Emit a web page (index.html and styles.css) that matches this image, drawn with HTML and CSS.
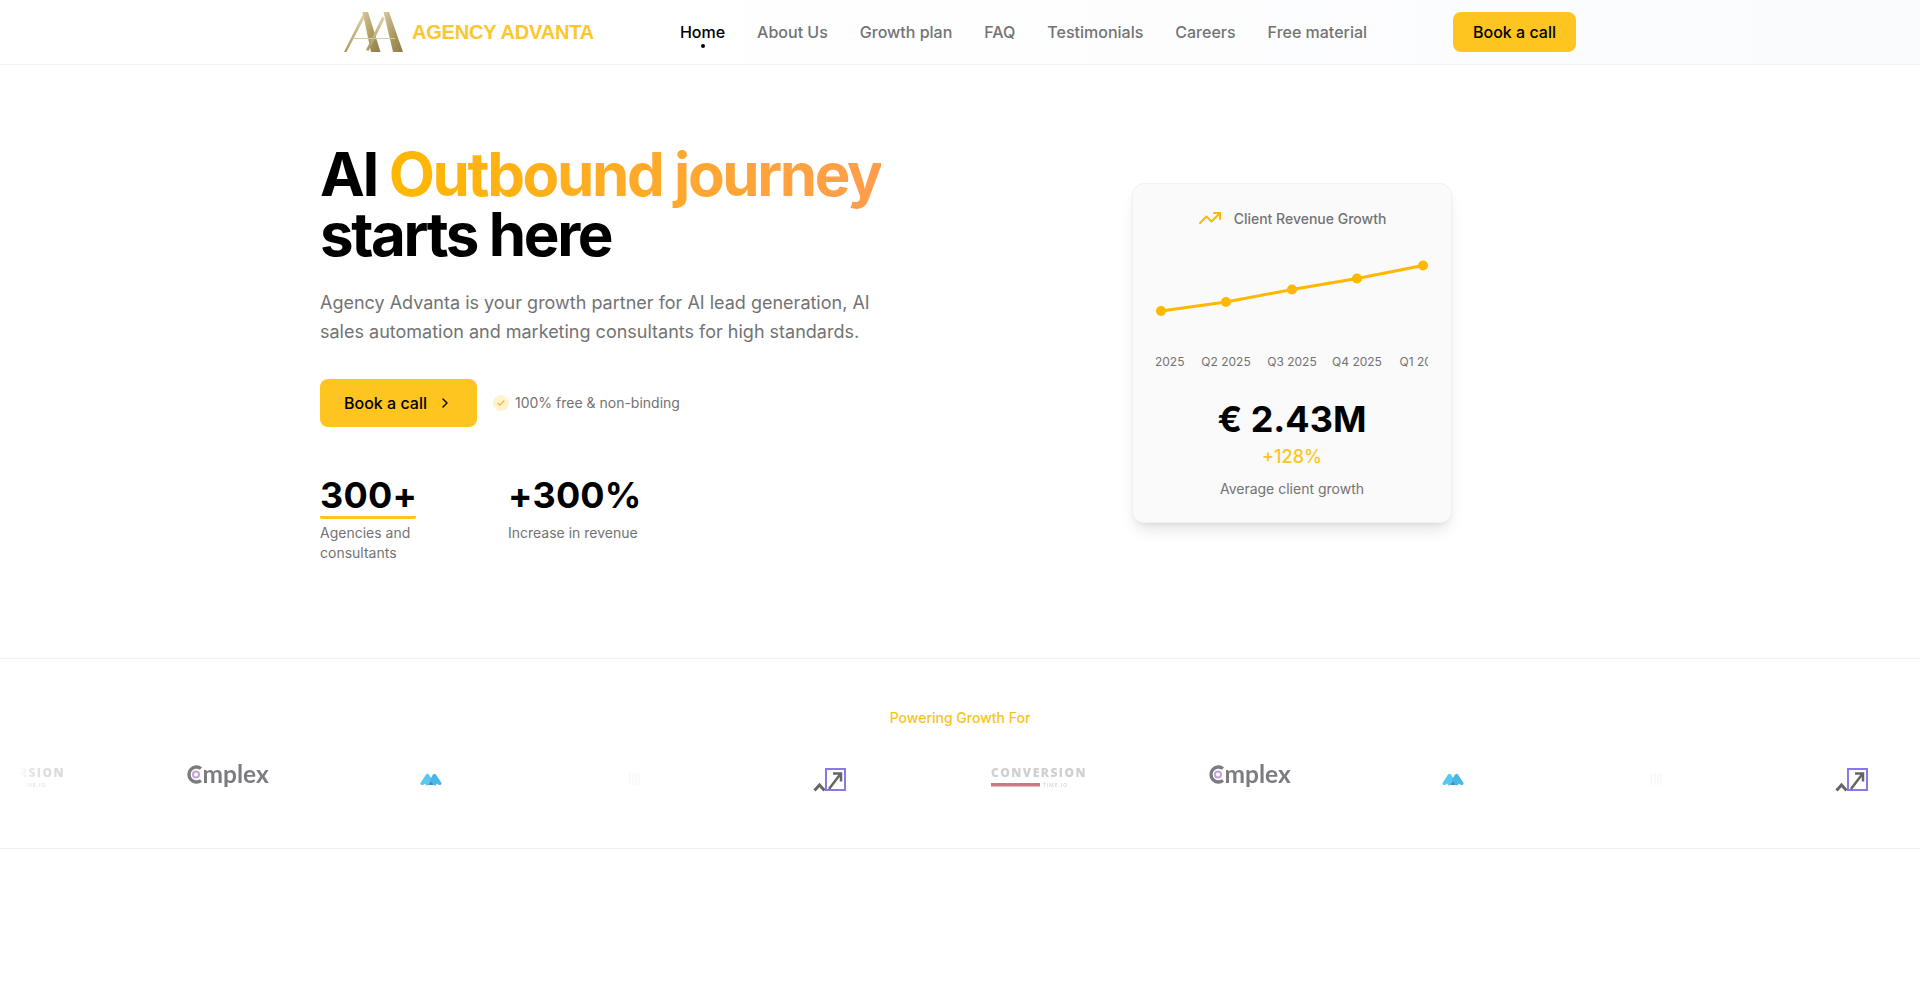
FILE: index.html
```html
<!DOCTYPE html>
<html lang="en">
<head>
<meta charset="utf-8">
<title>Agency Advanta</title>
<link rel="stylesheet" href="styles.css">
</head>
<body>
<header class="site-header">
  <div class="header-inner">
    <a class="brand" href="#">
      <svg class="brand-mark" viewBox="0 0 60 40" aria-hidden="true">
        <defs>
          <linearGradient id="gold" x1="0" y1="0" x2="1" y2="1">
            <stop offset="0" stop-color="#d6c89a"/>
            <stop offset=".55" stop-color="#ab9860"/>
            <stop offset="1" stop-color="#8d7b48"/>
          </linearGradient>
          <linearGradient id="goldB" x1="1" y1="0" x2="0" y2="1">
            <stop offset="0" stop-color="#dfd4ad"/>
            <stop offset="1" stop-color="#a8965e"/>
          </linearGradient>
        </defs>
        <polygon points="0,40 19,2 21,5 2.500,40" fill="url(#goldB)"/>
        <polygon points="18.500,0 24,0 36.500,40 27,40" fill="url(#gold)"/>
        <polygon points="22,38 38.500,4 40.500,7 24.500,39" fill="url(#goldB)"/>
        <polygon points="39.500,0 45,0 59,40 49,40" fill="url(#gold)"/>
        <rect x="9" y="26" width="20" height="1" fill="#d8cca4"/>
        <rect x="30" y="26" width="21" height="1" fill="#d8cca4"/>
      </svg>
      <span class="brand-name">AGENCY ADVANTA</span>
    </a>
    <nav class="main-nav">
      <a class="nav-link is-active" href="#">Home</a>
      <a class="nav-link" href="#">About Us</a>
      <a class="nav-link" href="#">Growth plan</a>
      <a class="nav-link" href="#">FAQ</a>
      <a class="nav-link" href="#">Testimonials</a>
      <a class="nav-link" href="#">Careers</a>
      <a class="nav-link" href="#">Free material</a>
    </nav>
    <a class="btn btn-small" href="#">Book a call</a>
  </div>
</header>

<main>
  <section class="hero">
    <div class="hero-copy">
      <h1 class="hero-title">AI <span class="accent">Outbound journey</span><br>starts here</h1>
      <p class="hero-lead">Agency Advanta is your growth partner for AI lead generation, AI sales automation and marketing consultants for high standards.</p>
      <div class="cta-row">
        <a class="btn btn-large" href="#">Book a call
          <svg class="chevron" viewBox="0 0 24 24" aria-hidden="true"><path d="m9 18 6-6-6-6"/></svg>
        </a>
        <span class="free-note">
          <span class="check-badge">
            <svg viewBox="0 0 24 24" aria-hidden="true"><path d="M20 6 9 17l-5-5"/></svg>
          </span>
          100% free &amp; non-binding
        </span>
      </div>
      <div class="stats">
        <div class="stat stat-first">
          <div class="stat-value stat-underlined">300+</div>
          <div class="stat-label">Agencies and consultants</div>
        </div>
        <div class="stat">
          <div class="stat-value">+300%</div>
          <div class="stat-label">Increase in revenue</div>
        </div>
      </div>
    </div>

    <aside class="card">
      <div class="card-title">
        <svg class="trend" viewBox="0 0 24 24" aria-hidden="true"><path d="M22 7 13.5 15.5 8.5 10.5 2 17"/><path d="M16 7h6v6"/></svg>
        <span>Client Revenue Growth</span>
      </div>
      <svg class="chart" viewBox="0 0 272 152" aria-label="Revenue chart">
        <polyline class="chart-line" points="5,53 70,44 136,31.5 201,20.5 267,7.500"/>
        <circle class="chart-dot" cx="5" cy="53" r="5"/>
        <circle class="chart-dot" cx="70" cy="44" r="5"/>
        <circle class="chart-dot" cx="136" cy="31.500" r="5"/>
        <circle class="chart-dot" cx="201" cy="20.500" r="5"/>
        <circle class="chart-dot" cx="267" cy="7.500" r="5"/>
        <text class="chart-label" x="5" y="107.500">Q1 2025</text>
        <text class="chart-label" x="70" y="107.500">Q2 2025</text>
        <text class="chart-label" x="136" y="107.500">Q3 2025</text>
        <text class="chart-label" x="201" y="107.500">Q4 2025</text>
        <text class="chart-label" x="267" y="107.500">Q1 2026</text>
      </svg>
      <div class="card-value">€ 2.43M</div>
      <div class="card-delta">+128%</div>
      <div class="card-note">Average client growth</div>
    </aside>
  </section>

  <section class="logos">
    <p class="logos-title">Powering Growth For</p>
    <div class="marquee">
      <div class="marquee-track">
        <div class="logo logo-conversion">
          <svg viewBox="0 0 100 30" aria-label="Conversion Time">
            <text class="conv-word" x="0" y="15">CONVERSION</text>
            <rect class="conv-bar" x="0" y="21" width="49" height="3.500"/>
            <text class="conv-sub" x="52" y="25">TIME.IO</text>
          </svg>
        </div>
        <div class="logo logo-complex">
          <svg viewBox="0 0 84 30" aria-label="Complex">
            <path class="cx-ring" d="M14 6.500A7.500 7.500 0 1 0 14 18.500"/>
            <circle class="cx-dot" cx="9" cy="12.500" r="3"/>
            <text class="cx-word" x="15.500" y="20.500">mplex</text>
          </svg>
        </div>
        <div class="logo logo-m">
          <svg viewBox="0 0 22 30" aria-label="M">
            <path class="m-left" d="M.5 21 6 12.500q1.500-1.500 3 0l3 5-4 5.500q-1 1-2 0l-1 -1.500q-1.500 2-3.500 1.500q-1.500-1 -1-2.500z"/>
            <path class="m-right" d="M21.500 21 16 12.500q-1.500-1.500-3 0l-3 5 4 5.500q1 1 2 0l1-1.500q1.500 2 3.500 1.500q1.500-1 1-2.500z"/>
            <path class="m-mid" d="M8 23 11 18.500l3 4.500z"/>
          </svg>
        </div>
        <div class="logo logo-faint">
          <svg viewBox="0 0 14 30" aria-label="Logo">
            <path class="faint-mark" d="M3 11q-2 6 0 12M6 11v12M9 11v12M11.500 11q2 6 0 12"/>
          </svg>
        </div>
        <div class="logo logo-arrow">
          <svg viewBox="0 0 34 30" aria-label="Arrow">
            <path class="ar-chev" d="M1.500 28.500 6.500 23 11.500 28.500"/>
            <rect class="ar-box" x="13" y="7" width="19" height="21"/>
            <path class="ar-shaft" d="M16 27 27 12.500M20 11.500h8v8"/>
          </svg>
        </div>

        <div class="logo logo-conversion">
          <svg viewBox="0 0 100 30" aria-label="Conversion Time">
            <text class="conv-word" x="0" y="15">CONVERSION</text>
            <rect class="conv-bar" x="0" y="21" width="49" height="3.500"/>
            <text class="conv-sub" x="52" y="25">TIME.IO</text>
          </svg>
        </div>
        <div class="logo logo-complex">
          <svg viewBox="0 0 84 30" aria-label="Complex">
            <path class="cx-ring" d="M14 6.500A7.500 7.500 0 1 0 14 18.500"/>
            <circle class="cx-dot" cx="9" cy="12.500" r="3"/>
            <text class="cx-word" x="15.500" y="20.500">mplex</text>
          </svg>
        </div>
        <div class="logo logo-m">
          <svg viewBox="0 0 22 30" aria-label="M">
            <path class="m-left" d="M.5 21 6 12.500q1.500-1.500 3 0l3 5-4 5.500q-1 1-2 0l-1 -1.500q-1.500 2-3.500 1.500q-1.500-1 -1-2.500z"/>
            <path class="m-right" d="M21.500 21 16 12.500q-1.500-1.500-3 0l-3 5 4 5.500q1 1 2 0l1-1.500q1.500 2 3.500 1.500q1.500-1 1-2.500z"/>
            <path class="m-mid" d="M8 23 11 18.500l3 4.500z"/>
          </svg>
        </div>
        <div class="logo logo-faint">
          <svg viewBox="0 0 14 30" aria-label="Logo">
            <path class="faint-mark" d="M3 11q-2 6 0 12M6 11v12M9 11v12M11.500 11q2 6 0 12"/>
          </svg>
        </div>
        <div class="logo logo-arrow">
          <svg viewBox="0 0 34 30" aria-label="Arrow">
            <path class="ar-chev" d="M1.500 28.500 6.500 23 11.500 28.500"/>
            <rect class="ar-box" x="13" y="7" width="19" height="21"/>
            <path class="ar-shaft" d="M16 27 27 12.500M20 11.500h8v8"/>
          </svg>
        </div>
      </div>
    </div>
  </section>
</main>
</body>
</html>
```
FILE: styles.css
```css
* { box-sizing: border-box; }

html, body {
  margin: 0;
  padding: 0;
  height: 100%;
  overflow: hidden;
  background: #fff;
  font-family: Inter, "Liberation Sans", sans-serif;
  color: #000;
}

a { text-decoration: none; color: inherit; }

/* Header */
.site-header {
  height: 65px;
  border-bottom: 1px solid #f2f2f2;
  background: linear-gradient(90deg, #fff 0%, #fff 30%, #fafbfd 100%);
}

.header-inner {
  width: 1232px;
  height: 64px;
  margin-left: 344px;
  display: flex;
  align-items: center;
  justify-content: space-between;
}

.brand {
  display: flex;
  align-items: center;
  gap: 8px;
}

.brand-mark {
  width: 60px;
  height: 40px;
  flex: none;
}

.brand-name {
  font-family: "Liberation Sans", Arial, sans-serif;
  font-weight: 700;
  font-size: 20px;
  letter-spacing: -0.2px;
  color: #fec62b;
  white-space: nowrap;
}

.main-nav {
  display: flex;
  gap: 32px;
}

.nav-link {
  position: relative;
  font-size: 16px;
  font-weight: 500;
  line-height: 24px;
  color: #737373;
  white-space: nowrap;
}

.nav-link.is-active { color: #000; }

.nav-link.is-active::after {
  content: "";
  position: absolute;
  left: 50%;
  bottom: -4px;
  width: 4px;
  height: 4px;
  margin-left: -2px;
  border-radius: 50%;
  background: #000;
}

.btn {
  display: inline-flex;
  align-items: center;
  justify-content: center;
  background: #fec520;
  color: #000;
  font-weight: 500;
  font-size: 16px;
  white-space: nowrap;
}

.btn-small {
  width: 123px;
  height: 40px;
  border-radius: 8px;
}

.btn-large {
  width: 157px;
  height: 48px;
  border-radius: 8px;
  gap: 10px;
}

.chevron {
  width: 16px;
  height: 16px;
  fill: none;
  stroke: #000;
  stroke-width: 2;
  stroke-linecap: round;
  stroke-linejoin: round;
}

/* Hero */
.hero {
  height: 594px;
  padding: 79px 0 0 320px;
  display: flex;
  align-items: flex-start;
  border-bottom: 1px solid #f0f0f0;
}

.hero-copy {
  width: 812px;
  flex: none;
}

.hero-title {
  margin: 0;
  font-size: 60px;
  line-height: 60px;
  font-weight: 700;
  letter-spacing: -2.400px;
}

.accent {
  background: linear-gradient(90deg, #ffb800, #ff9d4d);
  -webkit-background-clip: text;
  background-clip: text;
  color: transparent;
}

.hero-lead {
  width: 560px;
  margin: 24px 0 0;
  font-size: 18px;
  line-height: 29.25px;
  color: #737373;
}

.cta-row {
  display: flex;
  align-items: center;
  gap: 16px;
  margin-top: 32px;
}

.free-note {
  display: flex;
  align-items: center;
  gap: 6px;
  font-size: 14px;
  color: #737373;
}

.check-badge {
  width: 16px;
  height: 16px;
  border-radius: 50%;
  background: #fff3cf;
  display: flex;
  align-items: center;
  justify-content: center;
}

.check-badge svg {
  width: 10px;
  height: 10px;
  fill: none;
  stroke: #fcb62c;
  stroke-width: 3;
}

.stats {
  display: flex;
  gap: 92px;
  margin-top: 48px;
}

.stat-first { width: 96px; }

.stat-value {
  font-size: 36px;
  line-height: 40px;
  font-weight: 700;
  letter-spacing: 0.2px;
  white-space: nowrap;
}

.stat-underlined {
  padding-bottom: 1px;
  border-bottom: 3px solid #fec520;
  border-radius: 2px;
}

.stat-label {
  margin-top: 4px;
  font-size: 14px;
  line-height: 20px;
  color: #737373;
}

.stat + .stat .stat-label { margin-top: 8px; }

/* Card */
.card {
  width: 320px;
  height: 340px;
  flex: none;
  margin-top: 39px;
  padding: 24px;
  background: #fafafa;
  border: 1px solid #f2f2f2;
  border-radius: 12px;
  box-shadow: 0 10px 15px -3px rgba(0, 0, 0, .1), 0 4px 6px -4px rgba(0, 0, 0, .1);
}

.card-title {
  display: flex;
  align-items: center;
  justify-content: center;
  gap: 12px;
  height: 20px;
  font-size: 14px;
  font-weight: 500;
  color: #737373;
}

.trend {
  width: 24px;
  height: 24px;
  fill: none;
  stroke: #ffb800;
  stroke-width: 2;
  stroke-linecap: round;
  stroke-linejoin: round;
}

.chart {
  display: block;
  width: 272px;
  height: 152px;
  margin: 30px 0 0 -1px;
  overflow: hidden;
}

.chart-line {
  fill: none;
  stroke: #ffb800;
  stroke-width: 3;
}

.chart-dot { fill: #ffb800; }

.chart-label {
  font-size: 12px;
  font-weight: 400;
  fill: #737373;
  text-anchor: middle;
  font-family: Inter, sans-serif;
}

.card-value {
  margin-top: -11px;
  text-align: center;
  font-size: 36px;
  line-height: 40px;
  font-weight: 700;
}

.card-delta {
  margin-top: 4px;
  text-align: center;
  font-size: 18px;
  line-height: 28px;
  font-weight: 500;
  color: #fec520;
}

.card-note {
  margin-top: 8px;
  text-align: center;
  font-size: 14px;
  line-height: 20px;
  color: #737373;
}

/* Logos */
.logos {
  height: 190px;
  padding-top: 49px;
  border-bottom: 1px solid #f0f0f0;
}

.logos-title {
  margin: 0;
  text-align: center;
  font-size: 14px;
  line-height: 20px;
  font-weight: 500;
  color: #f5c518;
}

.marquee {
  margin-top: 34px;
  overflow: hidden;
  height: 40px;
  -webkit-mask-image: linear-gradient(90deg, transparent 20px, rgba(0, 0, 0, .6) 32px, #000 90px);
  mask-image: linear-gradient(90deg, transparent 20px, rgba(0, 0, 0, .6) 32px, #000 90px);
}

.marquee-track {
  display: flex;
  width: max-content;
  transform: translateX(-31px);
}

.logo { flex: none; filter: blur(.4px); }
.logo svg { display: block; height: 30px; }

.logo-conversion { width: 218px; }
.logo-conversion svg { width: 100px; }
.logo-complex { width: 233px; }
.logo-complex svg { width: 84px; }
.logo-m { width: 207px; }
.logo-m svg { width: 22px; }
.logo-faint { width: 186px; }
.logo-faint svg { width: 14px; }
.logo-arrow { width: 178px; }
.logo-arrow svg { width: 34px; }

.conv-word {
  font-family: "Open Sans", sans-serif;
  font-weight: 800;
  font-size: 12px;
  letter-spacing: 1.500px;
  fill: #d0d0d2;
}

.conv-sub {
  font-family: "Open Sans", sans-serif;
  font-size: 5px;
  letter-spacing: 1px;
  fill: #c8c8c8;
}

.conv-bar { fill: #c9797f; }

.cx-ring {
  fill: none;
  stroke: #7c7b80;
  stroke-width: 3.400;
}

.cx-dot {
  fill: #fff;
  stroke: #c6a0d6;
  stroke-width: 2;
}

.cx-word {
  font-family: Lato, sans-serif;
  font-weight: 700;
  font-size: 24.500px;
  fill: #7c7b80;
}

.m-left { fill: #57c8ee; }
.m-right { fill: #49b8e8; }
.m-mid { fill: #3f8fd0; }

.faint-mark {
  fill: none;
  stroke: #f4f4f4;
  stroke-width: 1;
}

.ar-chev {
  fill: none;
  stroke: #666;
  stroke-width: 3;
}

.ar-box {
  fill: #fff;
  stroke: #8878e8;
  stroke-width: 2;
}

.ar-shaft {
  fill: none;
  stroke: #666;
  stroke-width: 2.500;
}
```
